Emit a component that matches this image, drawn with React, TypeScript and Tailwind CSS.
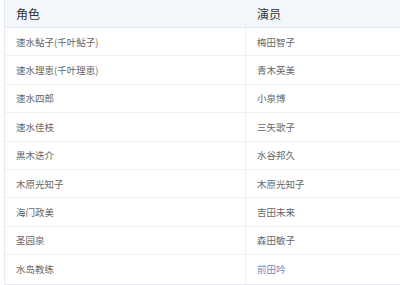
const rows = [
  { role: "速水鮎子(千叶鮎子)", actor: "梅田智子" },
  { role: "速水理恵(千叶理恵)", actor: "青木英美" },
  { role: "速水四郎", actor: "小泉博" },
  { role: "速水佳枝", actor: "三矢歌子" },
  { role: "黒木迭介", actor: "水谷邦久" },
  { role: "木原光知子", actor: "木原光知子" },
  { role: "海门政美", actor: "吉田未来" },
  { role: "圣园泉", actor: "森田敏子" },
  { role: "水岛教练", actor: "前田吟", link: true },
];

export default function App() {
  return (
    <div className="h-[285px] w-[400px] overflow-hidden bg-white pl-[4px]">
      <div className="w-[420px] border-l border-b border-[#e6e9ef] font-['Noto_Sans_CJK_SC',sans-serif]">
        <div className="flex h-[28px] border-b border-[#e3e7ee] bg-[#f3f7fc] text-[12px] text-[#333]">
          <div className="flex w-[241px] items-center pl-[11px]">角色</div>
          <div className="flex flex-1 items-center pl-[11px]">演员</div>
        </div>
        {rows.map((r, i) => (
          <div
            key={i}
            className="flex h-[28.4px] border-b border-[#eef0f4] text-[9.5px] text-[#666] last:border-b-0"
          >
            <div className="flex w-[241px] items-center border-r border-[#eef0f4] pl-[11px]">
              {r.role}
            </div>
            <div
              className={`flex flex-1 items-center pl-[11px] ${r.link ? "text-[#7a86c0]" : ""}`}
            >
              {r.actor}
            </div>
          </div>
        ))}
      </div>
    </div>
  );
}
